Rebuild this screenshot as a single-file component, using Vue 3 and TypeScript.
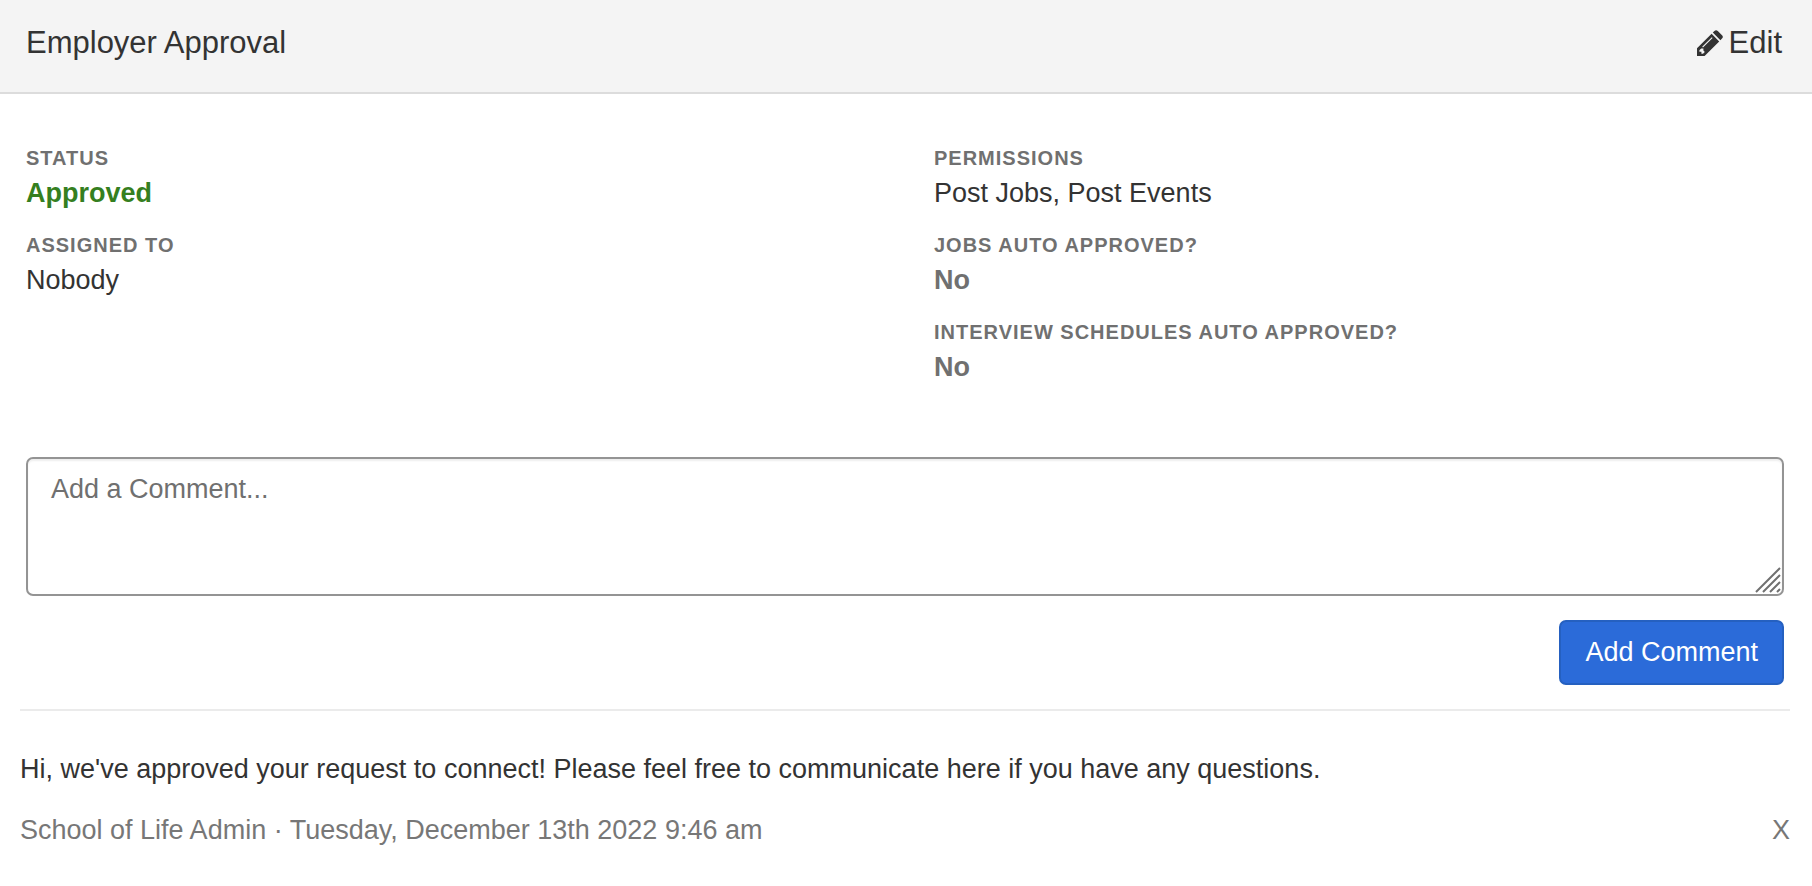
<script setup lang="ts">
import { ref } from 'vue'

interface Detail {
  label: string
  value: string
  tone: 'plain' | 'success' | 'muted'
}

interface Comment {
  id: number
  body: string
  author: string
  postedAt: string
}

const columns: Detail[][] = [
  [
    { label: 'Status', value: 'Approved', tone: 'success' },
    { label: 'Assigned to', value: 'Nobody', tone: 'plain' },
  ],
  [
    { label: 'Permissions', value: 'Post Jobs, Post Events', tone: 'plain' },
    { label: 'Jobs auto approved?', value: 'No', tone: 'muted' },
    { label: 'Interview schedules auto approved?', value: 'No', tone: 'muted' },
  ],
]

const draft = ref('')
const comments = ref<Comment[]>([
  {
    id: 1,
    body: "Hi, we've approved your request to connect! Please feel free to communicate here if you have any questions.",
    author: 'School of Life Admin',
    postedAt: 'Tuesday, December 13th 2022 9:46 am',
  },
])

function addComment(): void {
  const body = draft.value.trim()
  if (!body) return
  comments.value.push({ id: Date.now(), body, author: 'School of Life Admin', postedAt: new Date().toLocaleString() })
  draft.value = ''
}

function removeComment(id: number): void {
  comments.value = comments.value.filter((c) => c.id !== id)
}
</script>

<template>
  <section class="panel">
    <header class="panel-header">
      <h2 class="title">Employer Approval</h2>
      <a class="edit" href="#edit">
        <svg class="pencil" viewBox="0 0 26 26" aria-hidden="true">
          <path
            fill="currentColor"
            fill-rule="evenodd"
            d="M0 26V18.2L14.6 3.8L22.2 11.4L7.6 26ZM2.4 20.2V21.8H4.4V23.8H6L7.8 22L6.4 20.6V18.6H4.2ZM5.2 16.8L6 17.5L15.6 7.9L14.8 7.2Z"
          />
          <path fill="currentColor" d="M15.8 2.6L17.4 1Q19.1-.7 20.8 1L25 5.2Q26.7 6.9 25 8.6L23.4 10.2Z" />
        </svg>
        <span>Edit</span>
      </a>
    </header>

    <div class="details">
      <dl v-for="(column, i) in columns" :key="i" class="column">
        <div v-for="item in column" :key="item.label" class="detail">
          <dt class="label">{{ item.label }}</dt>
          <dd class="value" :class="item.tone">{{ item.value }}</dd>
        </div>
      </dl>
    </div>

    <form class="comment-form" @submit.prevent="addComment">
      <div class="field">
        <textarea v-model="draft" class="comment-input" rows="3" aria-label="Add a Comment" placeholder="Add a Comment..."></textarea>
        <svg class="grip" viewBox="0 0 26 26" aria-hidden="true">
          <path d="M1 25L25 1M8 25L25 8M15 25L25 15M22 25L25 22" fill="none" stroke="#707070" stroke-width="2" />
        </svg>
      </div>
      <button class="submit" type="submit">Add Comment</button>
    </form>

    <div class="comments">
      <article v-for="comment in comments" :key="comment.id" class="comment">
        <p class="body">{{ comment.body }}</p>
        <footer class="meta">
          <span>{{ comment.author }} · {{ comment.postedAt }}</span>
          <button class="remove" type="button" aria-label="Remove comment" @click="removeComment(comment.id)">X</button>
        </footer>
      </article>
    </div>
  </section>
</template>

<style>
body {
  margin: 0;
  background: #fff;
}
</style>

<style scoped>
.panel {
  font-family: "Liberation Sans", Arial, Helvetica, sans-serif;
  font-size: 27px;
  line-height: 40px;
  color: #333;
}

.panel-header {
  display: flex;
  justify-content: space-between;
  padding: 23px 30px 29px 26px;
  background: #f4f4f4;
  border-bottom: 2px solid #dcdcdc;
  font-size: 31px;
}

.title {
  margin: 0;
  font-size: inherit;
  font-weight: 400;
}

.edit {
  display: flex;
  align-items: center;
  gap: 6px;
  color: inherit;
  text-decoration: none;
}

.pencil {
  width: 26px;
  height: 26px;
}

.details {
  display: grid;
  grid-template-columns: 1fr 1fr;
  gap: 56px;
  padding: 49px 26px 70px;
}

.column {
  display: flex;
  flex-direction: column;
  gap: 17px;
  margin: 0;
}

.label {
  font-size: 20px;
  font-weight: 700;
  line-height: 30px;
  letter-spacing: 1px;
  text-transform: uppercase;
  color: #707070;
}

.value {
  margin: 0;
}

.value.success {
  font-weight: 700;
  color: #357f1f;
}

.value.muted {
  font-weight: 700;
  color: #707070;
}

.comment-form {
  display: flex;
  flex-direction: column;
  align-items: flex-end;
  gap: 24px;
  padding: 0 28px 24px 26px;
}

.field {
  position: relative;
  align-self: stretch;
}

.comment-input {
  display: block;
  box-sizing: border-box;
  width: 100%;
  padding: 10px 23px 5px;
  border: 2px solid #949494;
  border-radius: 7px;
  box-shadow: inset 0 2px 2px rgba(0, 0, 0, 0.07);
  background: #fff;
  font: inherit;
  color: inherit;
  resize: vertical;
}

.comment-input::placeholder {
  color: #707070;
  opacity: 1;
}

.comment-input::-webkit-resizer {
  background: transparent;
}

.grip {
  position: absolute;
  right: 3px;
  bottom: 3px;
  width: 26px;
  height: 26px;
  pointer-events: none;
}

.submit {
  padding: 10px 24px 11px;
  border: 2px solid #2560c0;
  border-radius: 7px;
  background: #2b6bd9;
  font: inherit;
  color: #fff;
  cursor: pointer;
}

.comments {
  margin: 0 22px 0 20px;
  border-top: 2px solid #ebebeb;
}

.comment {
  padding-top: 38px;
}

.body {
  margin: 0 0 21px;
}

.meta {
  display: flex;
  justify-content: space-between;
  color: #777;
}

.remove {
  padding: 0;
  border: 0;
  background: none;
  font: inherit;
  color: inherit;
  cursor: pointer;
}
</style>
